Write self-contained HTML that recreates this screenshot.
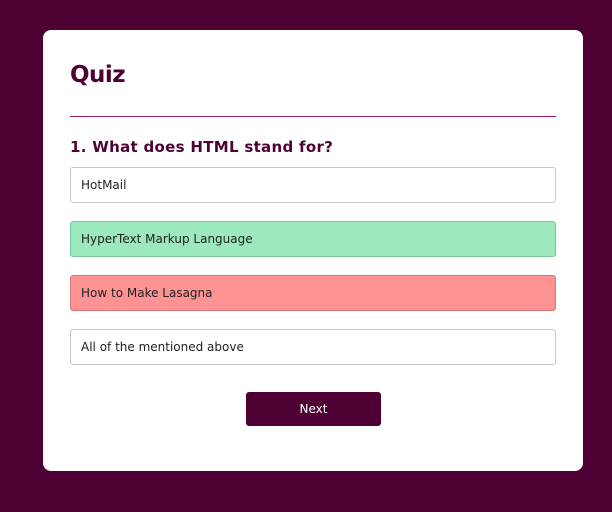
<!DOCTYPE html>
<html><head><style>
body{margin:0;width:612px;height:512px;background:#4f0035;font-family:"Comic Sans MS","DejaVu Sans",sans-serif;overflow:hidden;position:relative}
.card{position:absolute;left:43px;top:30px;width:540px;height:441px;background:#fff;border-radius:8px}
h1{position:absolute;left:27px;top:32px;margin:0;font-size:23px;color:#4f0035;font-weight:bold;letter-spacing:-0.5px}
.hr{position:absolute;left:27px;top:86px;width:486px;height:1px;background:#a0206e}
h2{position:absolute;left:27px;top:108px;margin:0;font-size:15px;color:#4f0035;font-weight:bold;letter-spacing:0.3px}
.opt{position:absolute;left:27px;height:36px;border:1px solid #c8c8c8;border-radius:3px;font-size:12px;line-height:35px;padding-left:10px;box-sizing:border-box;width:486px;color:#222}
.g{background:#9be9bd;border-color:#7cc59c}
.r{background:#ff9292;border-color:#d87878}
.btn{position:absolute;left:203px;top:362px;width:135px;height:34px;background:#4f0035;border-radius:3px;color:#fff;font-size:12px;text-align:center;line-height:35px}
</style></head><body>
<div class="card">
<h1>Quiz</h1>
<div class="hr"></div>
<h2>1. What does HTML stand for?</h2>
<div class="opt" style="top:137px">HotMail</div>
<div class="opt g" style="top:191px">HyperText Markup Language</div>
<div class="opt r" style="top:245px">How to Make Lasagna</div>
<div class="opt" style="top:299px">All of the mentioned above</div>
<div class="btn">Next</div>
</div>
</body></html>
